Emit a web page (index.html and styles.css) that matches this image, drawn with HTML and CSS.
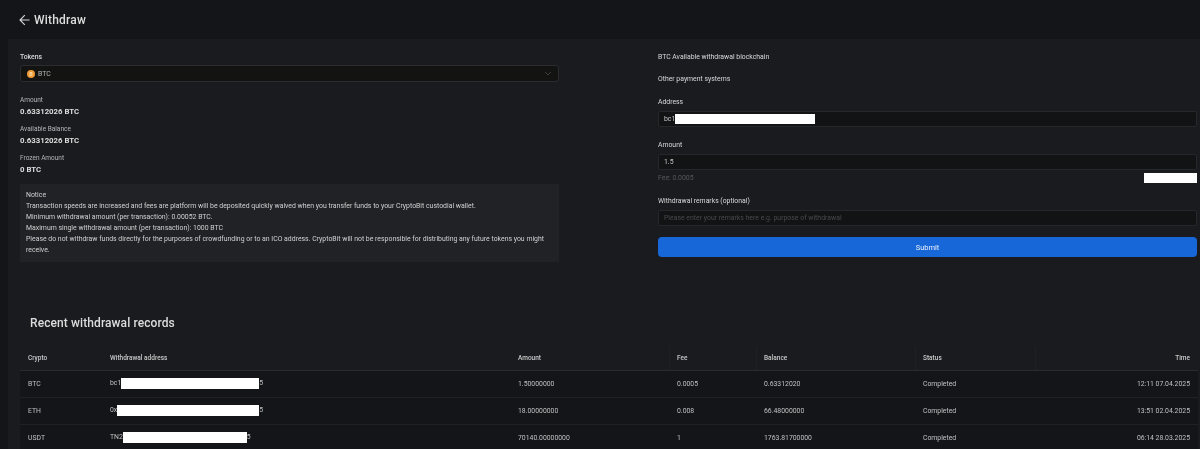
FILE: index.html
```html
<!DOCTYPE html>
<html lang="en">
<head>
  <meta charset="UTF-8" />
  <title>Withdraw</title>
  <link rel="stylesheet" href="styles.css">
</head>
<body>

<header class="top-bar">
  <svg class="back-icon" width="11" height="12" viewBox="0 0 11 12" fill="none" stroke="#d8d9da" stroke-width="1.1">
    <path d="M10.5 6H1M5.8 1.2L1 6l4.8 4.8"/>
  </svg>
  <h1>Withdraw</h1>
</header>

<main class="panel">
  <div class="columns">
    <section class="col">
      <div class="field-label tokens-label">Tokens</div>
      <div class="select">
        <span class="coin">B</span>
        <span class="select-text">BTC</span>
        <svg class="chevron" width="8" height="5" viewBox="0 0 8 5" fill="none" stroke="#3d3f43" stroke-width="1">
          <path d="M1 1l3 3 3-3"/>
        </svg>
      </div>

      <div class="stat">
        <div class="stat-label">Amount</div>
        <div class="stat-value">0.63312026 BTC</div>
      </div>
      <div class="stat">
        <div class="stat-label">Available Balance</div>
        <div class="stat-value">0.63312026 BTC</div>
      </div>
      <div class="stat">
        <div class="stat-label">Frozen Amount</div>
        <div class="stat-value">0 BTC</div>
      </div>

      <div class="notice">
        <div>Notice</div>
        <div>Transaction speeds are increased and fees are platform will be deposited quickly waived when you transfer funds to your CryptoBit custodial wallet.</div>
        <div>Minimum withdrawal amount (per transaction): 0.00052 BTC.</div>
        <div>Maximum single withdrawal amount (per transaction): 1000 BTC</div>
        <div>Please do not withdraw funds directly for the purposes of crowdfunding or to an ICO address. CryptoBit will not be responsible for distributing any future tokens you might receive.</div>
      </div>
    </section>

    <section class="col">
      <div class="field-label chain-label">BTC Available withdrawal blockchain</div>
      <div class="field-label other-label">Other payment systems</div>

      <div class="field-label address-label">Address</div>
      <div class="input"><span>bc1</span><span class="redact redact-address"></span></div>

      <div class="field-label amount-label">Amount</div>
      <div class="input"><span>1.5</span></div>
      <div class="fee-row">
        <span>Fee: 0.0005</span>
        <span class="redact redact-fee"></span>
      </div>

      <div class="field-label remarks-label">Withdrawal remarks (optional)</div>
      <div class="input placeholder">Please enter your remarks here e.g. purpose of withdrawal</div>

      <button type="button" class="submit-btn">Submit</button>
    </section>
  </div>

  <h2>Recent withdrawal records</h2>

  <table class="records">
    <thead>
      <tr>
        <th class="c-crypto">Crypto</th>
        <th class="c-address">Withdrawal address</th>
        <th class="c-amount">Amount</th>
        <th class="c-fee">Fee</th>
        <th class="c-balance">Balance</th>
        <th class="c-status">Status</th>
        <th class="c-time">Time</th>
      </tr>
    </thead>
    <tbody>
      <tr>
        <td>BTC</td>
        <td>bc1<span class="redact redact-row1"></span>5</td>
        <td>1.50000000</td>
        <td>0.0005</td>
        <td>0.63312020</td>
        <td>Completed</td>
        <td class="c-time">12:11 07.04.2025</td>
      </tr>
      <tr>
        <td>ETH</td>
        <td>0x<span class="redact redact-row2"></span>5</td>
        <td>18.00000000</td>
        <td>0.008</td>
        <td>66.48000000</td>
        <td>Completed</td>
        <td class="c-time">13:51 02.04.2025</td>
      </tr>
      <tr>
        <td>USDT</td>
        <td>TN2<span class="redact redact-row3"></span>5</td>
        <td>70140.00000000</td>
        <td>1</td>
        <td>1763.81700000</td>
        <td>Completed</td>
        <td class="c-time">06:14 28.03.2025</td>
      </tr>
    </tbody>
  </table>
</main>

</body>
</html>
```

FILE: styles.css
```css
html, body { height: 100%; }
body {
  margin: 0;
  background: #141518;
  color: #d4d5d6;
  font-family: Roboto, "Liberation Sans", sans-serif;
  font-size: 6.9px;
  overflow: hidden;
}

.top-bar {
  display: flex;
  align-items: center;
  gap: 4px;
  height: 39px;
  padding-left: 19px;
  box-sizing: border-box;
  filter: blur(0.3px);
}
.top-bar h1 {
  margin: 0;
  font-size: 12px;
  font-weight: 500;
  letter-spacing: 0.2px;
  color: #dcdddd;
}

.panel {
  margin-left: 8px;
  height: 410px;
  padding: 0 2px 0 12px;
  background: #1a1b1e;
  filter: blur(0.3px);
}

.columns {
  display: grid;
  grid-template-columns: 539px 539px;
  justify-content: space-between;
  height: 265px;
  padding-right: 1px;
}

.field-label { line-height: 10px; font-size: 6.85px; color: #d8d9da; }
.tokens-label { padding-top: 13px; margin-bottom: 3px; font-weight: 500; }
.chain-label { padding-top: 13px; }
.other-label { margin-top: 12px; }
.address-label { margin-top: 13px; }
.amount-label { margin-top: 13px; }
.remarks-label { margin-top: 12px; }

.select {
  display: flex;
  align-items: center;
  height: 17px;
  margin-bottom: 13px;
  box-sizing: border-box;
  padding: 0 6px;
  background: #131312;
  border: 1px solid #2b2c2f;
  border-radius: 3px;
}
.coin {
  width: 8px;
  height: 8px;
  margin-right: 3px;
  border-radius: 50%;
  background: #ee9a34;
  color: #f8dcae;
  font-size: 5.5px;
  font-weight: 700;
  line-height: 8px;
  text-align: center;
}
.select-text { color: #b5b6b7; }
.chevron { margin-left: auto; }

.stat { margin-top: 7px; }
.stat-label { line-height: 10px; font-size: 6.5px; color: #b5b6b8; }
.stat-value {
  margin-top: 1px;
  line-height: 11px;
  font-size: 7.8px;
  font-weight: 700;
  color: #dcdddd;
}

.notice {
  margin-top: 9px;
  padding: 6px;
  background: #212225;
  line-height: 11px;
  color: #cfd0d1;
}

.input {
  display: flex;
  align-items: center;
  height: 16px;
  margin-top: 4px;
  padding: 0 5px;
  box-sizing: border-box;
  background: #121315;
  border: 1px solid #26272a;
  border-radius: 2px;
  color: #c6c7c8;
}
.input.placeholder { color: #47494c; }

.fee-row {
  display: flex;
  justify-content: space-between;
  align-items: center;
  height: 12px;
  margin-top: 2px;
  color: #55575a;
}

.redact { display: inline-block; background: #fff; vertical-align: middle; }
.redact-address { width: 140px; height: 10px; }
.redact-fee { width: 53px; height: 10px; }
.redact-row1 { width: 138px; height: 11px; }
.redact-row2 { width: 142px; height: 11px; }
.redact-row3 { width: 124px; height: 11px; }

.submit-btn {
  display: block;
  width: 100%;
  height: 20px;
  margin-top: 11px;
  padding: 0;
  border: 0;
  border-radius: 4px;
  background: #1767d8;
  color: #e6eefb;
  font-family: inherit;
  font-size: 7.5px;
  font-weight: 400;
}

.panel h2 {
  margin: 0 0 0 10px;
  height: 42px;
  line-height: 38px;
  font-size: 12px;
  font-weight: 500;
  letter-spacing: 0.1px;
  color: #dcdddd;
}

.records {
  width: 100%;
  table-layout: fixed;
  border-collapse: collapse;
}
.records th {
  height: 24px;
  padding: 0 8px;
  box-sizing: border-box;
  text-align: left;
  font-size: 6.5px;
  font-weight: 500;
  color: #c8c9ca;
  border-bottom: 1px solid #2a2b2e;
}
.records td {
  height: 26px;
  padding: 0 8px;
  background: #141518;
  color: #c0c1c2;
  font-size: 6.85px;
  border-bottom: 1px solid #202124;
  white-space: nowrap;
}
.c-crypto { width: 82px; }
.c-address { width: 408px; }
.c-amount { width: 159px; }
.c-fee { width: 87px; }
.c-balance { width: 159px; }
.c-status { width: 120px; }
.records th.c-fee, .records th.c-balance, .records th.c-status, .records th.c-time {
  box-shadow: inset 1px 0 0 #1f2023;
}
.records th.c-time, .records td.c-time { text-align: right; }
```
